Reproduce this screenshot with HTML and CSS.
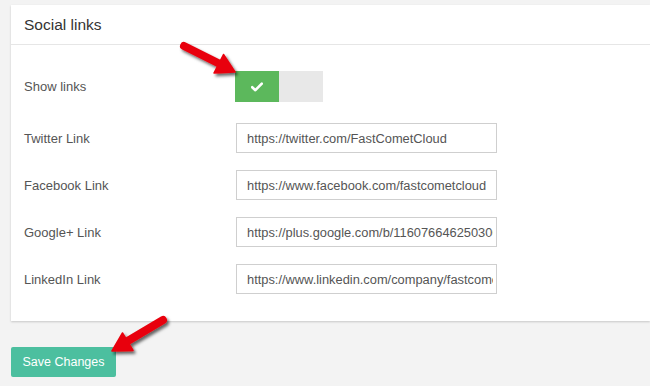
FILE: index.html
```html
<!DOCTYPE html>
<html lang="en">
<head>
  <meta charset="UTF-8">
  <title>Social links</title>
  <link rel="stylesheet" href="styles.css">
</head>
<body>

<div class="page">
  <div class="panel">
    <div class="panel-heading">Social links</div>
    <div class="panel-body">
      <div class="row toggle-row">
        <label class="row-label">Show links</label>
        <div class="toggle">
          <span class="toggle-on">
            <svg width="12" height="10" viewBox="0 0 12 10">
              <path d="M1.2 5.2 L4.4 8.2 L10.8 1.6" fill="none" stroke="#fff" stroke-width="2.6" stroke-linecap="round" stroke-linejoin="round"/>
            </svg>
          </span>
          <span class="toggle-off"></span>
        </div>
      </div>
      <div class="row">
        <label class="row-label" for="twitter">Twitter Link</label>
        <input class="field" type="text" id="twitter" value="https://twitter.com/FastCometCloud">
      </div>
      <div class="row">
        <label class="row-label" for="facebook">Facebook Link</label>
        <input class="field" type="text" id="facebook" value="https://www.facebook.com/fastcometcloud">
      </div>
      <div class="row">
        <label class="row-label" for="google">Google+ Link</label>
        <input class="field" type="text" id="google" value="https://plus.google.com/b/116076646250300000000">
      </div>
      <div class="row">
        <label class="row-label" for="linkedin">LinkedIn Link</label>
        <input class="field" type="text" id="linkedin" value="https://www.linkedin.com/company/fastcomet">
      </div>
    </div>
  </div>

  <button class="save-btn" type="button">Save Changes</button>

  <!-- red pointer arrows drawn over the page -->
  <svg class="arrows" width="650" height="386" viewBox="0 0 650 386">
    <defs>
      <filter id="shadow" x="-20%" y="-20%" width="140%" height="140%">
        <feDropShadow dx="2" dy="2.5" stdDeviation="1.5" flood-color="#000" flood-opacity="0.6"/>
      </filter>
    </defs>
    <g filter="url(#shadow)" fill="#e8000b" stroke="#e8000b">
      <line x1="184" y1="46" x2="220" y2="64" stroke-width="8" stroke-linecap="round"/>
      <polygon points="235,72 214,73 223.5,54.5" stroke-width="1.5" stroke-linejoin="round"/>
      <line x1="163" y1="320" x2="126" y2="342" stroke-width="8" stroke-linecap="round"/>
      <polygon points="112,351 133,350.5 122.5,333" stroke-width="1.5" stroke-linejoin="round"/>
    </g>
  </svg>
</div>

</body>
</html>
```

FILE: styles.css
```css
body {
  margin: 0;
  background-color: #f3f3f3;
  font-family: 'Liberation Sans', Arial, sans-serif;
  color: #555;
}
.page {
  position: relative;
  width: 650px;
  height: 386px;
  overflow: hidden;
  padding-top: 5px;
  box-sizing: border-box;
}
.panel {
  margin-left: 11px;
  background-color: #fff;
  box-shadow: 0 1px 2px rgba(0, 0, 0, 0.18);
}
.panel-heading {
  height: 39px;
  line-height: 40px;
  padding: 0 13px;
  font-size: 15.5px;
  color: #333;
  border-bottom: 1px solid #e6e6e6;
}
.panel-body {
  display: flex;
  flex-direction: column;
  gap: 17px;
  padding: 26px 13px 27px;
}
.row {
  display: flex;
  align-items: center;
}
.toggle-row {
  margin-bottom: 4px;
}
.row-label {
  width: 212px;
  font-size: 13px;
  color: #555;
}
.toggle {
  display: flex;
  margin-left: -1px;
}
.toggle-on,
.toggle-off {
  width: 44px;
  height: 31px;
}
.toggle-on {
  display: flex;
  align-items: center;
  justify-content: center;
  background-color: #5cb85c;
}
.toggle-off {
  background-color: #e8e8e8;
}
.field {
  width: 261px;
  height: 30px;
  box-sizing: border-box;
  padding: 0 3px 0 10px;
  border: 1px solid #cfcfcf;
  border-radius: 0;
  font-family: 'Liberation Sans', Arial, sans-serif;
  font-size: 12.85px;
  color: #555;
  outline: none;
}
.save-btn {
  display: block;
  margin: 26px 0 0 11px;
  height: 30px;
  width: 105px;
  padding: 0;
  border: none;
  border-radius: 2px;
  background-color: #4cbf9f;
  color: #fff;
  font-family: 'Liberation Sans', Arial, sans-serif;
  font-size: 12.5px;
  cursor: pointer;
}
.arrows {
  position: absolute;
  top: 0;
  left: 0;
  pointer-events: none;
}
```
